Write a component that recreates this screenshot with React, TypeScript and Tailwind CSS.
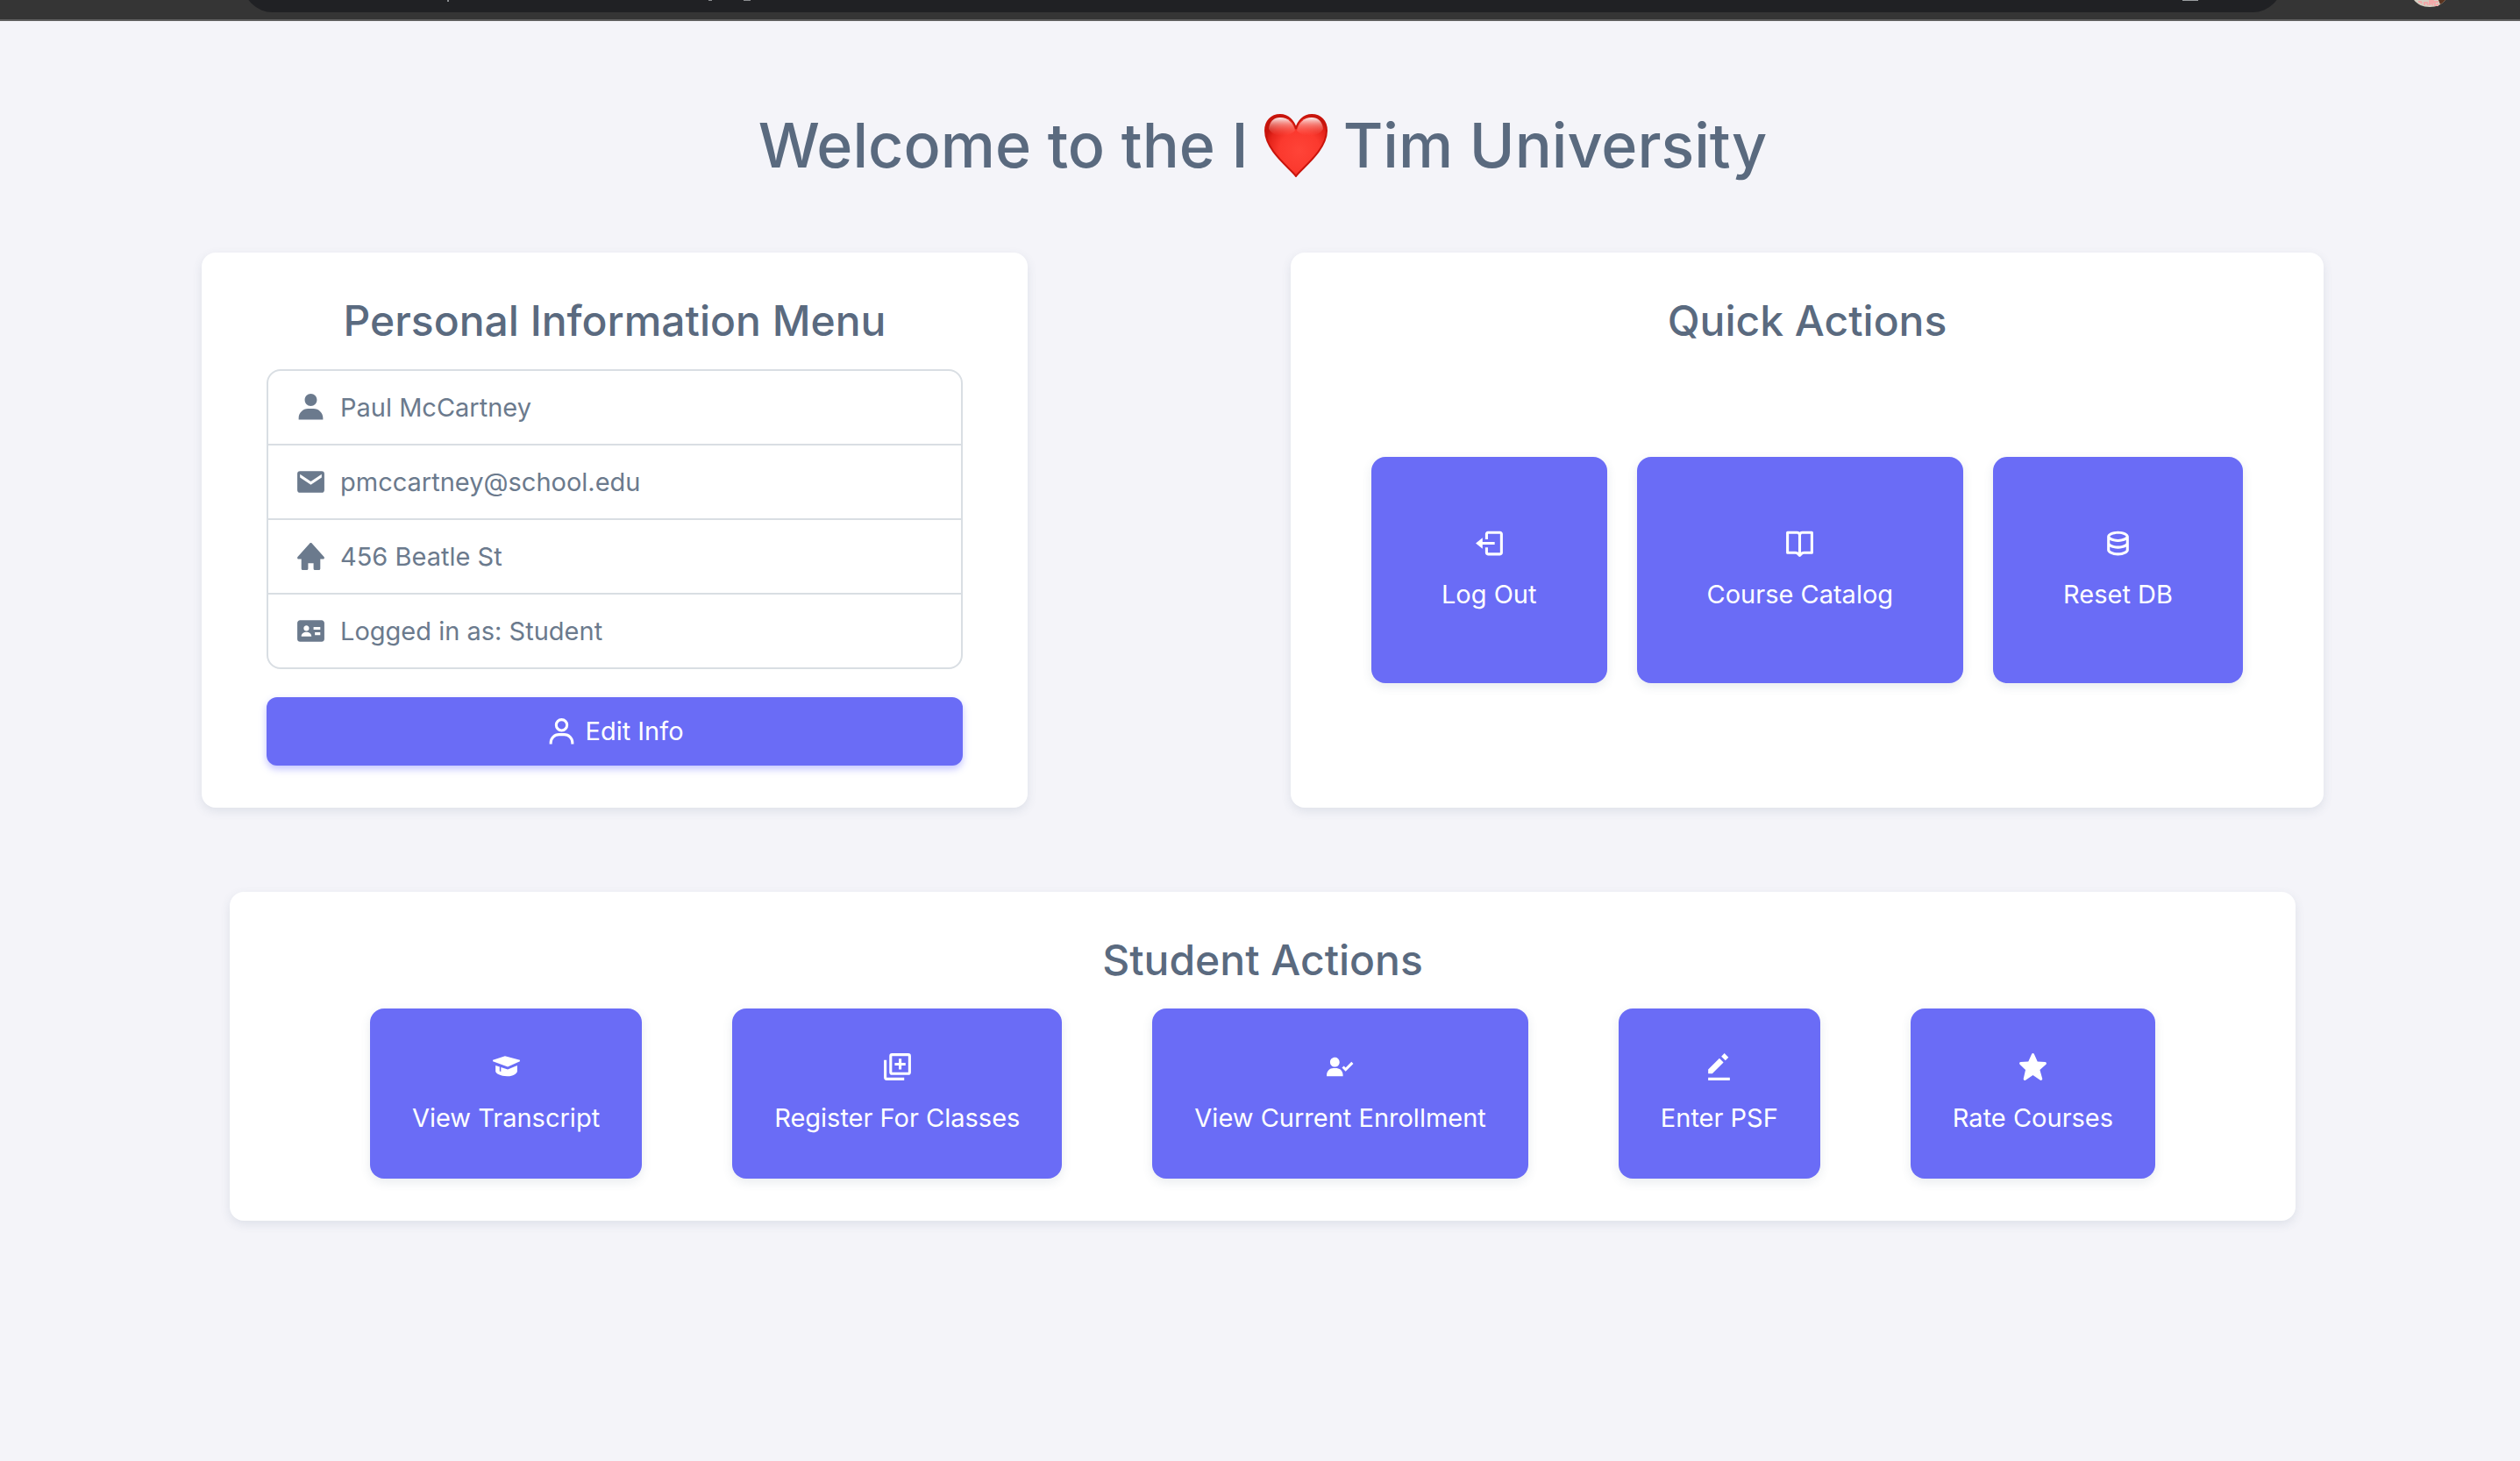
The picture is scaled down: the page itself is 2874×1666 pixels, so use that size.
import type { ReactNode } from "react";
import type { IconType } from "react-icons";
import {
  BiBookOpen,
  BiData,
  BiLogOut,
  BiSolidEditAlt,
  BiSolidEnvelope,
  BiSolidGraduation,
  BiSolidHome,
  BiSolidIdCard,
  BiSolidStar,
  BiSolidUser,
  BiSolidUserCheck,
  BiUser,
} from "react-icons/bi";

type Item = { icon: IconType; label: string };

const AddCopyIcon: IconType = ({ size = 24 }) => (
  <svg width={size} height={size} viewBox="0 0 24 24" fill="none" stroke="currentColor" strokeWidth="2" aria-hidden="true">
    <rect x="7" y="3" width="14" height="14" rx="1" />
    <path d="M3 7v13a1 1 0 0 0 1 1h13M14 6v8M10 10h8" />
  </svg>
);

const info: Item[] = [
  { icon: BiSolidUser, label: "Paul McCartney" },
  { icon: BiSolidEnvelope, label: "pmccartney@school.edu" },
  { icon: BiSolidHome, label: "456 Beatle St" },
  { icon: BiSolidIdCard, label: "Logged in as: Student" },
];

const quickActions: Item[] = [
  { icon: BiLogOut, label: "Log Out" },
  { icon: BiBookOpen, label: "Course Catalog" },
  { icon: BiData, label: "Reset DB" },
];

const studentActions: Item[] = [
  { icon: BiSolidGraduation, label: "View Transcript" },
  { icon: AddCopyIcon, label: "Register For Classes" },
  { icon: BiSolidUserCheck, label: "View Current Enrollment" },
  { icon: BiSolidEditAlt, label: "Enter PSF" },
  { icon: BiSolidStar, label: "Rate Courses" },
];

function BrowserEdge() {
  return (
    <div className="flex h-6 items-start overflow-hidden border-b-2 border-[#606060] bg-[#353535] pr-[84px] pl-[277px]">
      <div className="-mt-[54px] mr-[149px] flex h-[68px] flex-1 items-start rounded-full bg-[#202124] pt-[54px] pr-24 pl-[233px]">
        <div className="h-0.5 w-0.5 bg-[#8a8d90]" />
        <div className="ml-[296px] h-px w-1 bg-[#8a8d90]" />
        <div className="ml-9 h-px w-2 bg-[#8a8d90]" />
        <div className="ml-auto h-px w-[18px] bg-[#9a9da0]" />
      </div>
      <svg width="38" height="8" viewBox="0 0 38 8" aria-hidden="true">
        <path d="M1 0C5 5 11 8 19 8S33 5 37 0Z" fill="#d5cfc2" />
        <path d="M29 0h8c-2 2-4 4-6 5z" fill="#5a3420" />
        <path d="M6 2h3l1 2M13 6V3h3l1 3M19 6V1h4v2h-3l3 3M29 2h-4v4h3V4" stroke="#f2a9a9" strokeWidth="2" fill="none" />
      </svg>
    </div>
  );
}

function Heart() {
  return (
    <svg width="72" height="72" viewBox="0 0 72 72" role="img" aria-label="love">
      <defs>
        <radialGradient id="heart-body" gradientUnits="userSpaceOnUse" cx="40" cy="42" r="42">
          <stop offset="0" stopColor="#ff4438" />
          <stop offset="0.55" stopColor="#fb392e" />
          <stop offset="0.85" stopColor="#e4231a" />
          <stop offset="1" stopColor="#c4140c" />
        </radialGradient>
        <linearGradient id="heart-shine" x1="0" y1="0" x2="0" y2="1">
          <stop offset="0" stopColor="#fff" stopOpacity="0.95" />
          <stop offset="0.4" stopColor="#ffb0a8" stopOpacity="0.6" />
          <stop offset="1" stopColor="#ff6a60" stopOpacity="0" />
        </linearGradient>
      </defs>
      <path
        d="M36 71C31 63 1 42 1 19C1 8 8 1 18 1C27 1 34 8 36 17C38 8 45 1 54 1C64 1 71 8 71 19C71 42 41 63 36 71Z"
        fill="url(#heart-body)"
        stroke="#c9140c"
        strokeWidth="2"
      />
      <path d="M5 17C6 8 11 4 18 4C27 4 33 10 35 19C28 27 10 27 5 17Z" fill="url(#heart-shine)" />
      <path d="M67 17C66 8 61 4 54 4C45 4 39 10 37 19C44 27 62 27 67 17Z" fill="url(#heart-shine)" />
    </svg>
  );
}

function Card({ title, children }: { title: string; children: ReactNode }) {
  return (
    <section className="flex flex-col rounded-2xl bg-white py-12 shadow-[0_4px_12px_rgba(67,89,113,0.12)]">
      <h2 className="mb-[26px] text-center text-[48px] leading-[59px] font-medium text-[#5a6a7f]">{title}</h2>
      {children}
    </section>
  );
}

function Tile({ item, large }: { item: Item; large?: boolean }) {
  const Icon = item.icon;
  return (
    <button
      type="button"
      className={`flex flex-col items-center gap-[19px] rounded-2xl bg-[#6a6cf6] text-white shadow-[0_4px_12px_rgba(67,89,113,0.12)] ${large ? "p-20" : "p-12"}`}
    >
      <Icon size={37} aria-hidden="true" />
      <span className="text-[29px] leading-[42px] whitespace-nowrap">{item.label}</span>
    </button>
  );
}

export default function App() {
  return (
    <div className="min-h-screen bg-[#f4f4f9] font-['Inter',sans-serif] text-[#6b7a8d]">
      <BrowserEdge />
      <main className="pt-[98px] pr-56 pl-[230px]">
        <h1 className="flex items-center justify-center gap-[18px] text-[70px] leading-[88px] font-medium text-[#5a6a7f]">
          <span>Welcome to the I</span>
          <Heart />
          <span>Tim University</span>
        </h1>

        <div className="mt-[78px] grid grid-cols-[942fr_1178fr] gap-[300px]">
          <Card title="Personal Information Menu">
            <div className="px-[74px]">
              <ul className="divide-y-2 divide-[#d9dee3] rounded-2xl border-2 border-[#d9dee3]">
                {info.map(({ icon: Icon, label }) => (
                  <li key={label} className="flex items-center gap-[15px] px-[30px] py-5 text-[29px] leading-[43px]">
                    <Icon size={37} aria-hidden="true" />
                    {label}
                  </li>
                ))}
              </ul>
              <button
                type="button"
                className="mt-8 flex w-full items-center justify-center gap-2 rounded-xl bg-[#6a6cf6] py-[18px] text-[29px] leading-[42px] text-white shadow-[0_4px_8px_rgba(105,108,255,0.4)]"
              >
                <BiUser size={37} aria-hidden="true" />
                Edit Info
              </button>
            </div>
          </Card>
          <Card title="Quick Actions">
            <div className="flex flex-1 items-center justify-center gap-[34px] pt-1.5">
              {quickActions.map((item) => (
                <Tile key={item.label} item={item} large />
              ))}
            </div>
          </Card>
        </div>

        <div className="mt-24 px-8">
          <Card title="Student Actions">
            <div className="flex items-center justify-center gap-[103px]">
              {studentActions.map((item) => (
                <Tile key={item.label} item={item} />
              ))}
            </div>
          </Card>
        </div>
      </main>
    </div>
  );
}
